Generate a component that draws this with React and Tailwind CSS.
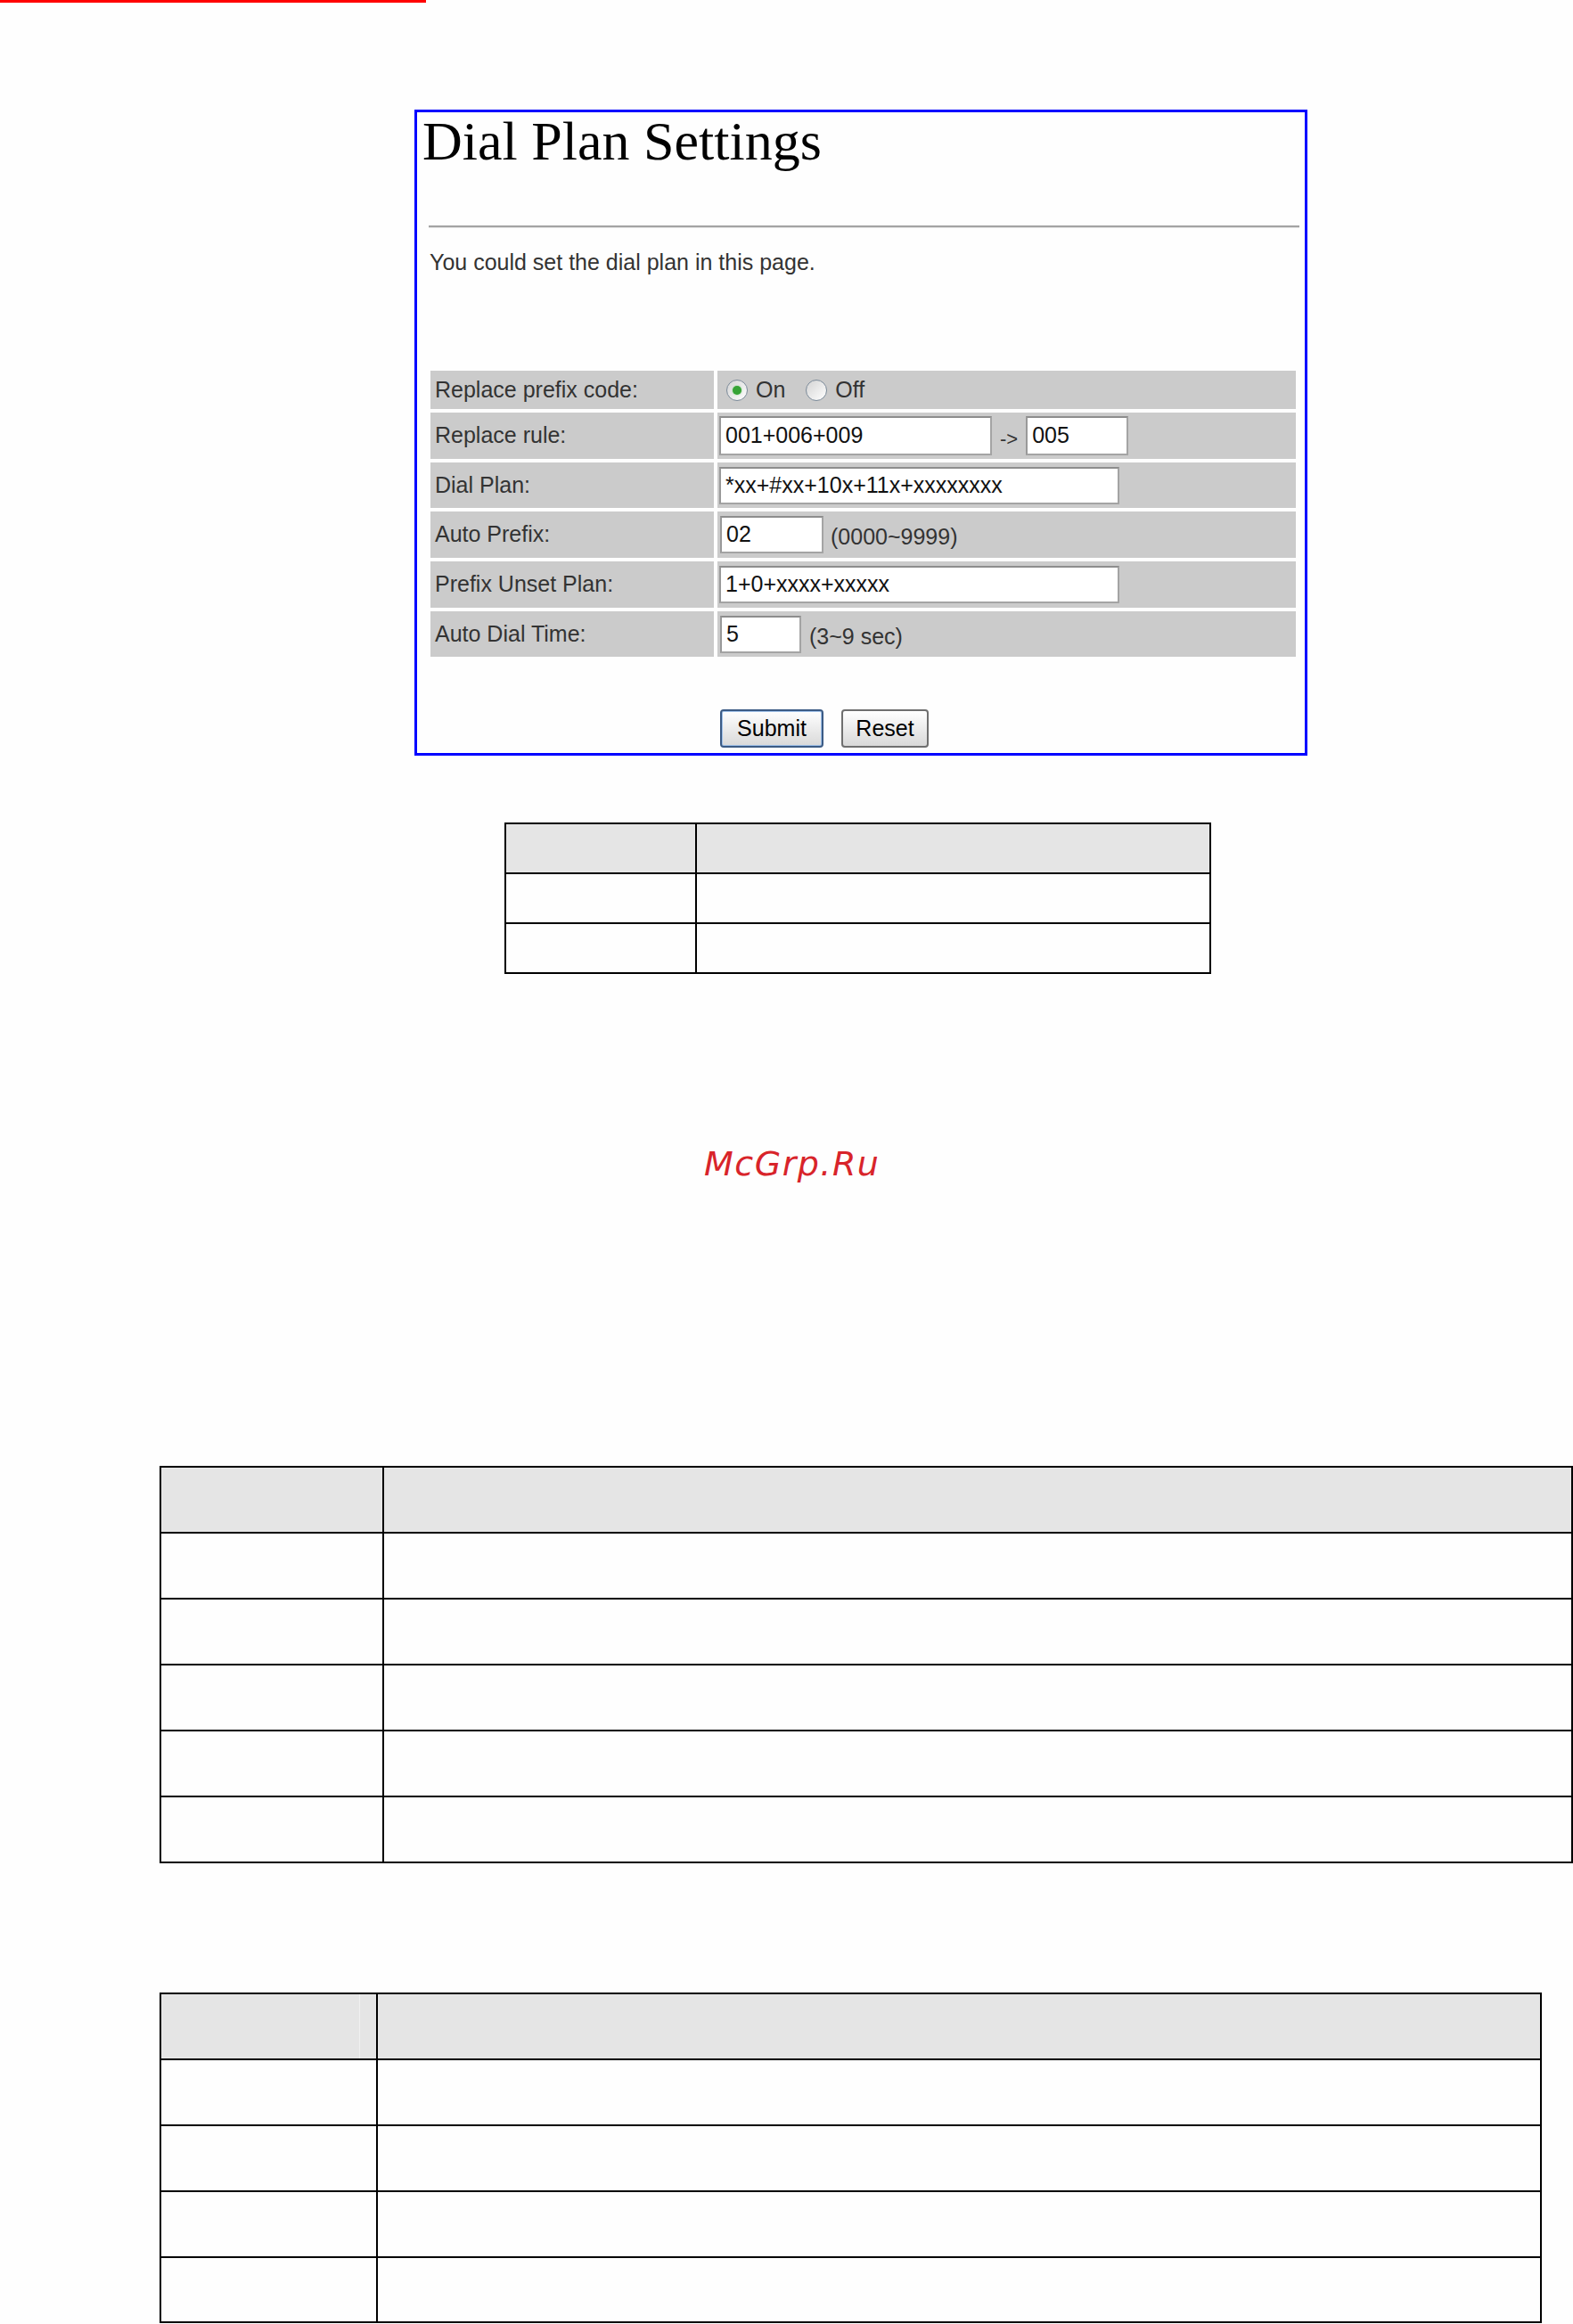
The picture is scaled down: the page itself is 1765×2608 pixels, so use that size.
import React from "react";

const arial = { fontFamily: '"Liberation Sans", Arial, sans-serif' };

function Radio({ checked }) {
  return (
    <span className="flex w-[24px] h-[24px] items-center justify-center rounded-full border border-[#7b8a99] bg-linear-to-br from-[#d4d4d4] to-[#ffffff]">
      {checked && <span className="block w-[10px] h-[10px] rounded-full bg-[#36a336] shadow-[0_0_2px_#7fd67f]" />}
    </span>
  );
}

function Field({ width, children }) {
  return (
    <div
      className={`flex items-center h-[42px] bg-white border-2 border-[#a4a4a4] border-t-[#8d8d8d] border-l-[#999] pl-[5px] text-[25px] text-[#111] ${width}`}
    >
      {children}
    </div>
  );
}

function Row({ label, height, children }) {
  return (
    <div className={`flex gap-[4px] ${height}`}>
      <div className="flex items-center w-[318px] bg-[#cbcbcb] pl-[5px] text-[25px] text-[#333]">{label}</div>
      <div className="flex items-center flex-1 bg-[#cbcbcb] pl-[2px] text-[25px] text-[#333]">{children}</div>
    </div>
  );
}

// rows after the header carry a 2px top border inside their height
function BlankTable({ width, col1, rowH, faint }) {
  return (
    <div className={`border-2 border-black bg-[#fefefe] ${width}`}>
      {rowH.map((h, i) => (
        <div key={i} className={`flex ${h} ${i > 0 ? "border-t-2 border-black" : "bg-[#e5e5e5]"}`}>
          <div className={`${col1} border-r-2 border-black`}>
            {i === 0 && faint && <div className={`${faint} h-full border-r border-[#f1f1f1]`} />}
          </div>
          <div className="flex-1" />
        </div>
      ))}
    </div>
  );
}

export default function App() {
  return (
    <div className="w-[1765px] h-[2608px] overflow-hidden bg-[#fefefe]" style={arial}>
      {/* red mark */}
      <div className="w-[478px] h-[3px] bg-[#ff0000]" />

      {/* screenshot box */}
      <div className="ml-[465px] mt-[120px] w-[1002px] h-[725px] border-[3px] border-[#0000ff] bg-[#fefefe]">
        <h1
          className="mt-[1px] ml-[6px] h-[62px] text-[62px] leading-none text-black"
          style={{ fontFamily: '"Liberation Serif", "Times New Roman", serif' }}
        >
          Dial Plan Settings
        </h1>

        <div className="mt-[64px] ml-[13px] w-[977px]">
          <div className="h-[2px] bg-[#a3a3a3]" />
          <div className="h-[1px] bg-[#e2e2e2]" />
        </div>

        <p className="mt-[24px] ml-[14px] text-[25px] leading-[29px] text-[#333]">
          You could set the dial plan in this page.
        </p>

        <div className="mt-[107px] ml-[15px] w-[971px] flex flex-col gap-[4px]">
          <Row label="Replace prefix code:" height="h-[43px]">
            <div className="flex items-center pl-[8px]">
              <Radio checked />
              <span className="ml-[9px]">On</span>
              <span className="ml-[23px]">
                <Radio />
              </span>
              <span className="ml-[9px]">Off</span>
            </div>
          </Row>
          <Row label="Replace rule:" height="h-[52px]">
            <Field width="w-[306px] h-[44px]">001+006+009</Field>
            <span className="ml-[9px] mt-[6px] text-[22px]">-&gt;</span>
            <span className="ml-[9px]">
              <Field width="w-[115px] h-[44px]">005</Field>
            </span>
          </Row>
          <Row label="Dial Plan:" height="h-[51px]">
            <Field width="w-[449px]">*xx+#xx+10x+11x+xxxxxxxx</Field>
          </Row>
          <Row label="Auto Prefix:" height="h-[52px]">
            <span className="ml-[1px]">
              <Field width="w-[116px]">02</Field>
            </span>
            <span className="ml-[8px] mt-[6px]">(0000~9999)</span>
          </Row>
          <Row label="Prefix Unset Plan:" height="h-[52px]">
            <Field width="w-[449px]">1+0+xxxx+xxxxx</Field>
          </Row>
          <Row label="Auto Dial Time:" height="h-[51px]">
            <span className="ml-[1px]">
              <Field width="w-[91px]">5</Field>
            </span>
            <span className="ml-[9px] mt-[6px]">(3~9 sec)</span>
          </Row>
        </div>

        <div className="mt-[59px] ml-[340px] flex gap-[20px]">
          <button className="w-[116px] h-[43px] rounded-[4px] border-2 border-[#3b5b85] bg-linear-to-b from-[#ffffff] to-[#d9d9d9] text-[25px] text-black shadow-[inset_0_0_0_1px_#9fc0e8]">
            Submit
          </button>
          <button className="w-[98px] h-[43px] rounded-[4px] border-2 border-[#6f6f6f] bg-linear-to-b from-[#ffffff] to-[#d9d9d9] text-[25px] text-black">
            Reset
          </button>
        </div>
      </div>

      {/* small table */}
      <div className="mt-[75px] ml-[566px]">
        <BlankTable width="w-[793px]" col1="w-[214px]" rowH={["h-[54px]", "h-[56px]", "h-[56px]"]} />
      </div>

      {/* watermark */}
      <div
        className="mt-[194px] ml-[790px] h-[38px] text-[38px] leading-none italic tracking-[1.5px] text-[#d8242a]"
        style={{ fontFamily: '"DejaVu Sans", Verdana, sans-serif' }}
      >
        McGrp.Ru
      </div>

      {/* table 2 */}
      <div className="mt-[320px] ml-[179px]">
        <BlankTable
          width="w-[1586px]"
          col1="w-[250px]"
          rowH={["h-[72px]", "h-[74px]", "h-[74px]", "h-[74px]", "h-[74px]", "h-[74px]"]}
        />
      </div>

      {/* table 3 */}
      <div className="mt-[145px] ml-[179px]">
        <BlankTable
          width="w-[1551px]"
          col1="w-[243px]"
          rowH={["h-[72px]", "h-[74px]", "h-[74px]", "h-[74px]", "h-[73px]"]}
          faint="w-[223px]"
        />
      </div>
    </div>
  );
}
